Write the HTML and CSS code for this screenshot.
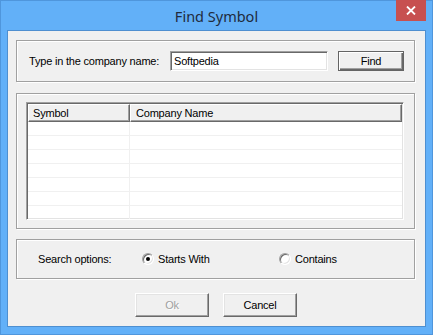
FILE: index.html
```html
<!DOCTYPE html>
<html lang="en">
<head>
    <meta charset="UTF-8">
    <title>Find Symbol</title>
    <link rel="stylesheet" href="styles.css">
</head>
<body>

    <div class="window">
        <!-- Title bar -->
        <div class="titlebar">
            <span></span>
            <span class="title">Find Symbol</span>
            <span class="close">
                <svg width="10" height="9" viewBox="0 0 10 9">
                    <path d="M1 0.5 L9 8.5 M9 0.5 L1 8.5" stroke="#fff" stroke-width="1.8" fill="none"/>
                </svg>
            </span>
        </div>

        <div class="client">
            <!-- Company name -->
            <div class="group search-row">
                <label class="name-label" for="company">Type in the company name:</label>
                <input class="textbox" id="company" type="text" value="Softpedia">
                <button class="btn btn-default">Find</button>
            </div>

            <!-- Results -->
            <div class="group results">
                <div class="listview">
                    <div class="lv-header">
                        <div class="lv-col col-symbol">Symbol</div>
                        <div class="lv-col col-name">Company Name</div>
                    </div>
                    <div class="lv-row"><div class="col-symbol"></div><div class="col-name"></div></div>
                    <div class="lv-row"><div class="col-symbol"></div><div class="col-name"></div></div>
                    <div class="lv-row"><div class="col-symbol"></div><div class="col-name"></div></div>
                    <div class="lv-row"><div class="col-symbol"></div><div class="col-name"></div></div>
                    <div class="lv-row"><div class="col-symbol"></div><div class="col-name"></div></div>
                    <div class="lv-row"><div class="col-symbol"></div><div class="col-name"></div></div>
                    <div class="lv-row"><div class="col-symbol"></div><div class="col-name"></div></div>
                </div>
            </div>

            <!-- Options -->
            <div class="group options">
                <span class="opt-label">Search options:</span>
                <span class="option opt-starts"><span class="radio checked"></span>Starts With</span>
                <span class="option"><span class="radio"></span>Contains</span>
            </div>

            <div class="actions">
                <button class="btn" disabled>Ok</button>
                <button class="btn">Cancel</button>
            </div>
        </div>
    </div>

</body>
</html>
```

FILE: styles.css
```css
body {
    margin: 0;
    padding: 0;
    background: #62b0f8;
    font-family: "Liberation Sans", Arial, sans-serif;
    font-size: 11px;
    letter-spacing: -0.2px;
    color: #000;
}

.window {
    width: 433px;
    height: 335px;
    box-sizing: border-box;
    border: 1px solid #4f96dc;
    background: #62b0f8;
    padding: 0 6px 7px 6px;
}

.titlebar {
    height: 29px;
    display: grid;
    grid-template-columns: 1fr auto 1fr;
}

.title {
    font-family: "Noto Sans", "Open Sans", sans-serif;
    font-size: 14.5px;
    letter-spacing: 0;
    color: #1f2b3d;
    line-height: 29px;
    padding-top: 1px;
}

.close {
    justify-self: end;
    align-self: start;
    margin-top: -1px;
    width: 30px;
    height: 21px;
    background: #c75050;
    display: flex;
    align-items: center;
    justify-content: center;
}

.client {
    height: 297px;
    box-sizing: border-box;
    border: 1px solid #4e8fd0;
    background: #f0f0f0;
    padding: 9px 10px 0 8px;
}

.group {
    border: 1px solid #a0a0a0;
    box-shadow: 1px 1px 0 #fff, inset 1px 1px 0 #fff;
    box-sizing: border-box;
}

.search-row {
    height: 42px;
    display: flex;
    align-items: center;
    padding: 0 10px 0 12px;
    margin-bottom: 11px;
}

.name-label {
    width: 141px;
    flex: none;
}

.textbox {
    width: 158px;
    height: 20px;
    box-sizing: border-box;
    margin: 0 10px 0 0;
    padding: 0 0 0 3px;
    font-family: "Liberation Sans", Arial, sans-serif;
    font-size: 11px;
    letter-spacing: -0.2px;
    background: #fff;
    border: 1px solid;
    border-color: #a0a0a0 #fff #fff #a0a0a0;
    box-shadow: inset 1px 1px 0 #696969, inset -1px -1px 0 #e3e3e3;
    outline: none;
}

.btn {
    width: 74px;
    height: 24px;
    box-sizing: border-box;
    padding: 0;
    font-family: "Liberation Sans", Arial, sans-serif;
    font-size: 11px;
    letter-spacing: -0.2px;
    color: #000;
    background: #f0f0f0;
    border: 1px solid;
    border-color: #fff #696969 #696969 #fff;
    box-shadow: inset -1px -1px 0 #a0a0a0, inset 1px 1px 0 #e3e3e3;
}

.btn:disabled {
    color: #a0a0a0;
    text-shadow: 1px 1px 0 #fff;
}

.btn-default {
    width: 66px;
    height: 20px;
    border-color: #646464;
    box-shadow: inset 1px 1px 0 #fff, inset -1px -1px 0 #696969, inset -2px -2px 0 #a0a0a0;
}

.results {
    height: 136px;
    padding: 8px 10px 0 9px;
    margin-bottom: 10px;
}

.listview {
    height: 118px;
    box-sizing: border-box;
    overflow: hidden;
    background: #fff;
    border: 1px solid;
    border-color: #a0a0a0 #fff #fff #a0a0a0;
    box-shadow: inset 1px 1px 0 #696969, inset -1px -1px 0 #e3e3e3;
    padding: 1px;
}

.lv-header {
    display: flex;
    height: 18px;
}

.lv-col {
    background: #f0f0f0;
    box-sizing: border-box;
    line-height: 16px;
    border: 1px solid;
    border-color: #fff #696969 #696969 #fff;
    box-shadow: inset -1px -1px 0 #a0a0a0;
}

.col-symbol {
    width: 102px;
    flex: none;
    box-sizing: border-box;
    padding-left: 4px;
}

.col-name {
    flex: 1;
    padding-left: 5px;
}

.lv-row {
    display: flex;
    height: 14px;
    box-sizing: border-box;
    border-bottom: 1px solid #f0f0f0;
}

.lv-row .col-symbol {
    border-right: 1px solid #f0f0f0;
}

.options {
    height: 40px;
    display: flex;
    align-items: center;
    padding-left: 21px;
    margin-bottom: 14px;
}

.opt-label {
    width: 104px;
}

.option {
    display: flex;
    align-items: center;
}

.opt-starts {
    width: 137px;
}

.radio {
    width: 12px;
    height: 12px;
    box-sizing: border-box;
    border-radius: 50%;
    background: #fff;
    border: 1px solid;
    border-color: #a0a0a0 #fff #fff #a0a0a0;
    box-shadow: inset 1px 1px 0 #696969, inset -1px -1px 0 #e3e3e3;
    margin-right: 4px;
    display: flex;
    align-items: center;
    justify-content: center;
}

.radio.checked::after {
    content: "";
    width: 4px;
    height: 4px;
    border-radius: 50%;
    background: #000;
}

.actions {
    display: flex;
    justify-content: center;
    gap: 14px;
    padding-left: 1px;
}
```
